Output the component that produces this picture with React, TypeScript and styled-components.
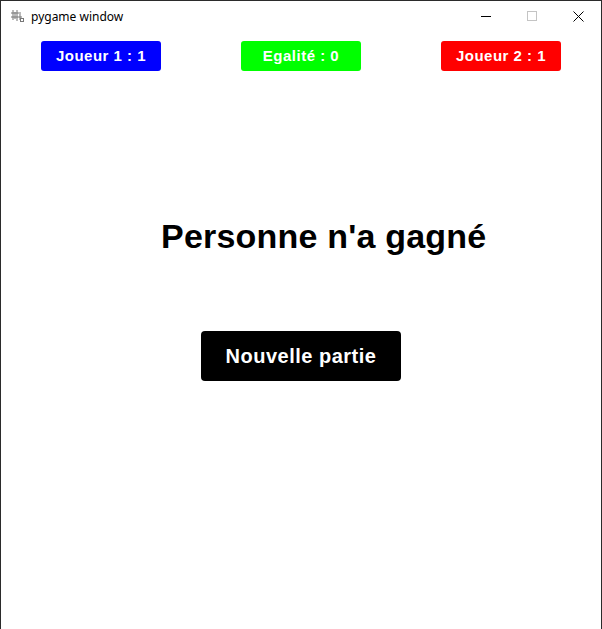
import styled, { createGlobalStyle } from 'styled-components';

const Global = createGlobalStyle`
  html, body {
    margin: 0;
    padding: 0;
    background: #ffffff;
  }
`;

const Window = styled.div`
  box-sizing: border-box;
  width: 602px;
  height: 629px;
  border-left: 1px solid #2b2b2b;
  border-right: 1px solid #2b2b2b;
  border-top: 1px solid #2b2b2b;
  background: #ffffff;
  display: flex;
  flex-direction: column;
`;

const TitleBar = styled.div`
  height: 30px;
  display: flex;
  align-items: center;
  padding-left: 9px;
  font-family: "Noto Sans", "Open Sans", sans-serif;
  font-size: 12px;
  color: #000;
`;

const TitleText = styled.span`
  margin-left: 7px;
  flex: 1;
`;

const Controls = styled.div`
  display: flex;
  height: 100%;
`;

const CtrlButton = styled.div`
  width: 46px;
  height: 100%;
  display: flex;
  align-items: center;
  justify-content: center;
`;

const Screen = styled.main`
  flex: 1;
  display: flex;
  flex-direction: column;
  font-family: "Liberation Sans", Arial, sans-serif;
`;

const ScoreRow = styled.div`
  display: flex;
  gap: 80px;
  padding: 10px 0 0 40px;
`;

const ScoreBox = styled.div<{ bg: string }>`
  width: 120px;
  height: 30px;
  padding-bottom: 2px;
  box-sizing: border-box;
  border-radius: 3px;
  background: ${p => p.bg};
  color: #fff;
  font-weight: bold;
  font-size: 15px;
  letter-spacing: 0.5px;
  display: flex;
  align-items: center;
  justify-content: center;
`;

const Message = styled.h1`
  margin: 145px 0 0 160px;
  font-size: 34px;
  font-weight: bold;
  letter-spacing: 0.2px;
  line-height: 40px;
  color: #000;
`;

const NewGame = styled.button`
  margin: 75px 0 0 200px;
  width: 200px;
  height: 50px;
  border: none;
  border-radius: 4px;
  background: #000;
  color: #fff;
  font-family: "Liberation Sans", Arial, sans-serif;
  font-weight: bold;
  font-size: 20px;
  letter-spacing: 0.5px;
  padding: 0;
  cursor: pointer;
`;

const PygameIcon = () => (
  <svg width="14" height="14" viewBox="0 0 14 14" fill="none" stroke="#777" strokeWidth="1">
    <path d="M3 1v10M7 1v11M1 4h10M1 8h11M5 3v7M10 5v6" />
    <rect x="10.5" y="9.5" width="3" height="3" />
  </svg>
);

export default function App() {
  return (
    <Window>
      <Global />
      <TitleBar>
        <PygameIcon />
        <TitleText>pygame window</TitleText>
        <Controls>
          <CtrlButton>
            <svg width="10" height="10" viewBox="0 0 10 10">
              <path d="M0 5.5h10" stroke="#000" strokeWidth="1" />
            </svg>
          </CtrlButton>
          <CtrlButton>
            <svg width="10" height="10" viewBox="0 0 10 10">
              <rect x="0.5" y="0.5" width="9" height="9" fill="none" stroke="#c4c4c4" />
            </svg>
          </CtrlButton>
          <CtrlButton>
            <svg width="11" height="11" viewBox="0 0 11 11">
              <path d="M0.5 0.5l10 10M10.5 0.5l-10 10" stroke="#000" strokeWidth="1" />
            </svg>
          </CtrlButton>
        </Controls>
      </TitleBar>
      <Screen>
        <ScoreRow>
          <ScoreBox bg="#0000ff">Joueur 1 : 1</ScoreBox>
          <ScoreBox bg="#00ff00">Egalité : 0</ScoreBox>
          <ScoreBox bg="#ff0000">Joueur 2 : 1</ScoreBox>
        </ScoreRow>
        <Message>Personne n'a gagné</Message>
        <NewGame>Nouvelle partie</NewGame>
      </Screen>
    </Window>
  );
}
